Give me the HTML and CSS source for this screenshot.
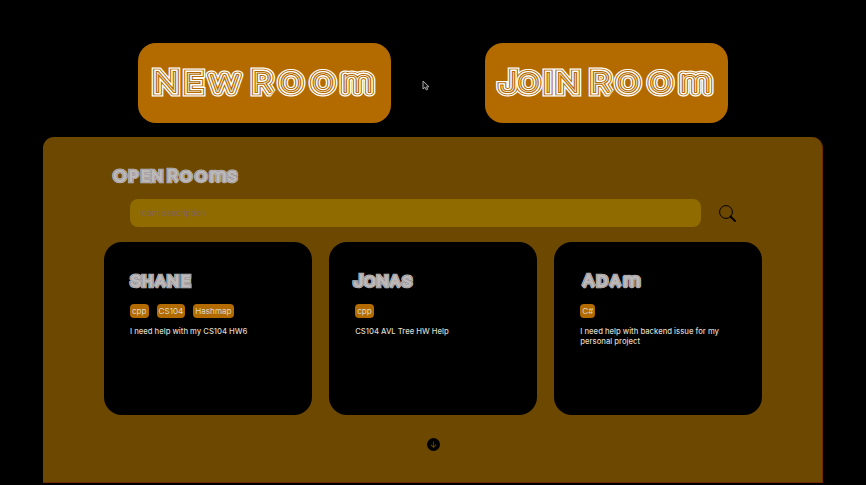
FILE: index.html
```html
<!DOCTYPE html>
<html lang="en">
<head>
<meta charset="utf-8">
<title>Open Rooms</title>
<link rel="stylesheet" href="styles.css">
</head>
<body>
<header class="actions">
  <button class="action new">
    <svg class="neon" width="253" height="80">
      <g transform="translate(0 49) scale(1.2 1)">
        <text id="new" class="a" x="23.3 46.3 72.1 90 103.6 127.5 154.2 182.9">N<tspan class="s">e</tspan><tspan class="l">w</tspan> R<tspan class="s">oo</tspan><tspan class="l">m</tspan></text>
        <use href="#new" class="b"/><use href="#new" class="c"/><use href="#new" class="d"/>
      </g>
    </svg>
  </button>
  <button class="action join">
    <svg class="neon" width="243" height="80">
      <g transform="translate(0 49) scale(1.2 1)">
        <text id="join" class="a" x="19.2 36.2 52.8 68.8 82 96.3 119.2 146.2 175.6">J<tspan class="s">oin</tspan> R<tspan class="s">oo</tspan><tspan class="l">m</tspan></text>
        <use href="#join" class="b"/><use href="#join" class="c"/><use href="#join" class="d"/>
      </g>
    </svg>
  </button>
</header>
<svg class="cursor" width="8" height="12" viewBox="0 0 8 12"><path d="M1 1v8l2-1.7L4.4 10l1.3-.7-1.2-2.5H7Z"/></svg>
<main class="panel">
  <h1 class="title">
    <svg class="neon small" width="128" height="20">
      <g transform="translate(0 13.6) scale(.636 .53)">
        <text id="open" class="a" x="11 32.2 51.1 69.2 93.6 114.8 138.4 165 187.1">O<tspan class="s">pen</tspan>R<tspan class="s">oo</tspan><tspan class="l">m</tspan><tspan class="s">s</tspan></text>
        <use href="#open" class="b"/><use href="#open" class="c"/>
      </g>
    </svg>
  </h1>
  <div class="search">
    <input class="field" type="text" placeholder="room description">
    <svg class="glass" width="17" height="17" viewBox="0 0 17 17"><circle cx="7" cy="7" r="6.4"/><path d="M11.5 11.5 16 16"/></svg>
  </div>
  <section class="cards">
    <article class="card">
      <h2 class="name">
        <svg class="neon small" width="128" height="20">
          <g transform="translate(0 13.6) scale(.636 .53)">
            <text id="shane" class="a" x="9 27.5 47.5 67.5 87.5">S<tspan class="s">hane</tspan></text>
            <use href="#shane" class="b"/><use href="#shane" class="c"/>
          </g>
        </svg>
      </h2>
      <div class="tags"><span class="tag">cpp</span><span class="tag">CS104</span><span class="tag">Hashmap</span></div>
      <p class="text">I need help with my CS104 HW6</p>
    </article>
    <article class="card">
      <h2 class="name">
        <svg class="neon small" width="128" height="20">
          <g transform="translate(0 13.6) scale(.636 .53)">
            <text id="jonas" class="a" x="5.2 22.8 43.2 62.8 82">J<tspan class="s">onas</tspan></text>
            <use href="#jonas" class="b"/><use href="#jonas" class="c"/>
          </g>
        </svg>
      </h2>
      <div class="tags"><span class="tag">cpp</span></div>
      <p class="text">CS104 AVL Tree HW Help</p>
    </article>
    <article class="card">
      <h2 class="name">
        <svg class="neon small" width="128" height="20">
          <g transform="translate(0 13.6) scale(.636 .53)">
            <text id="adam" class="a" x="13.4 34.9 55.5 81.3">A<tspan class="s">da</tspan><tspan class="l">m</tspan></text>
            <use href="#adam" class="b"/><use href="#adam" class="c"/>
          </g>
        </svg>
      </h2>
      <div class="tags"><span class="tag">C#</span></div>
      <p class="text">I need help with backend issue for my personal project</p>
    </article>
  </section>
  <svg class="more" width="13" height="13" viewBox="0 0 16 16"><path d="M16 8A8 8 0 1 1 0 8a8 8 0 0 1 16 0M8.5 4.5a.5.5 0 0 0-1 0v5.793L5.354 8.146a.5.5 0 1 0-.708.708l3 3a.5.5 0 0 0 .708 0l3-3a.5.5 0 0 0-.708-.708L8.5 10.293z"/></svg>
</main>
</body>
</html>
```
FILE: styles.css
```css
* { box-sizing: border-box; }
body {
  margin: 0;
  height: 485px;
  overflow: hidden;
  background: #000;
  font-family: Inter, "Liberation Sans", sans-serif;
}
.actions {
  display: flex;
  gap: 94px;
  padding: 43px 0 0 138px;
}
.action {
  height: 80px;
  padding: 0;
  border: 0;
  border-radius: 18px;
  background: #b36b00;
}
.new { width: 253px; }
.join { width: 243px; }
.neon {
  display: block;
  overflow: visible;
  font-family: Inter, sans-serif;
  font-weight: 100;
  font-size: 27px;
  text-anchor: middle;
  --line: #fff;
  --gap: #b36b00;
}
.neon .s { font-size: 25px; text-transform: uppercase; }
.neon .l { font-size: 31px; stroke-linejoin: round; }
/* Concentric strokes give each letter its parallel neon lines. */
.neon g {
  fill: var(--line);
  stroke: var(--line);
  stroke-width: 9px;
  stroke-linejoin: miter;
  stroke-miterlimit: 1.5;
}
.neon .b { stroke-width: 6.7px; stroke: var(--gap); }
.neon .c { stroke-width: 4.8px; stroke: var(--line); }
.neon .d { stroke-width: 2.2px; stroke: var(--gap); fill: #fff; paint-order: stroke; }
.small { --line: #bdb9b8; --gap: #96939a; }
.neon.small g { stroke-width: 8.2px; }
.neon.small .b { stroke-width: 5.8px; }
.neon.small .c { stroke-width: 3.6px; }
.neon.small .s { font-size: 23.5px; }
.cursor {
  position: absolute;
  left: 422px;
  top: 80px;
  fill: #111;
  stroke: #bbb;
  stroke-width: .9;
}
.panel {
  width: 780px;
  height: 346px;
  margin: 14px 0 0 43px;
  padding: 30px 60px 0 61px;
  border-radius: 11px 11px 0 0;
  background: #6c4800;
  border-right: 1px solid #702c00;
  border-bottom: 1px solid #702c00;
}
.title { margin: 0 0 0 9px; height: 32.4px; }
.search { display: flex; align-items: center; gap: 18px; margin-left: 26px; }
.field {
  width: 571px;
  height: 28px;
  padding: 0 9px;
  border: 0;
  border-radius: 8px;
  background: #906c00;
  font: 400 8.3px Inter, sans-serif;
}
.field::placeholder { color: #80625a; opacity: 1; }
.glass { fill: none; stroke: #000; stroke-width: 1; }
.glass path { stroke-width: 1.8; stroke-linecap: round; }
.cards {
  display: grid;
  grid-template-columns: repeat(3, 1fr);
  gap: 17.5px;
  margin-top: 14.6px;
}
.card {
  height: 173px;
  padding: 30px 26px 0;
  border-radius: 18px;
  background: #000;
  color: #ddd9c8;
}
.name { margin: 0; height: 32px; }
.tags { display: flex; gap: 8px; }
.tag {
  height: 14px;
  padding: 0 2px;
  border-radius: 4px;
  background: #b36b00;
  font-size: 8.1px;
  line-height: 14px;
}
.text { margin: 9px 0 0; font-size: 7.7px; font-weight: 500; line-height: 10px; }
.more { display: block; margin: 23px auto 0; }
```
